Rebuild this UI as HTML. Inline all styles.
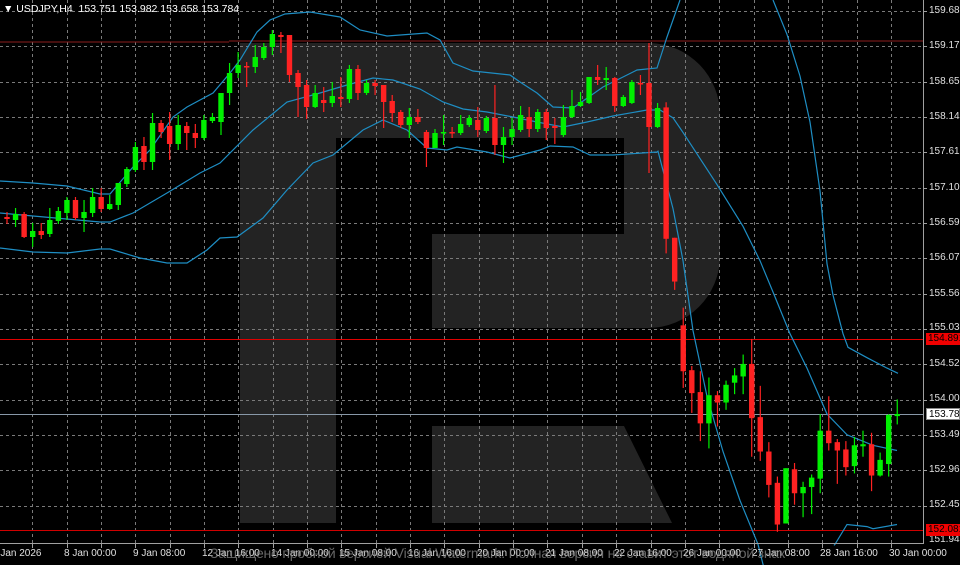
<!DOCTYPE html>
<html><head><meta charset="utf-8"><style>
html,body{margin:0;padding:0;background:#000;width:960px;height:565px;overflow:hidden}
#c{position:absolute;left:0;top:0}
.t{position:absolute;font:10px "Liberation Sans",sans-serif;color:#e0e0e0;white-space:nowrap;line-height:11px}
.hd{position:absolute;left:3px;top:3px;font:10.5px "Liberation Sans",sans-serif;color:#fff;white-space:nowrap}
.wm{position:absolute;left:210px;top:545px;font:14px "Liberation Sans","DejaVu Sans",sans-serif;color:#8a8a8a;white-space:nowrap;opacity:.75;letter-spacing:-0.2px}
.box{position:absolute;left:926px;width:34px;height:12px;font:10px "Liberation Sans",sans-serif;line-height:12px;padding-left:2px;box-sizing:border-box;overflow:hidden}
</style></head><body>
<svg id="c" width="960" height="565" xmlns="http://www.w3.org/2000/svg">
<path d="M240 43 L650 43 A72 72 0 0 1 720 115 L720 256 A72 72 0 0 1 648 328 L432 328 L432 234 L624 234 L624 138 L336 138 L336 523 L240 523 Z M432 426 L624 426 L672 523 L432 523 Z" fill="#232323"/>
<g id="grid" stroke="#7a7a7a" stroke-width="1" stroke-dasharray="3,3"></g>
<line x1="0" y1="42" x2="229" y2="42" stroke="#8b1c1c"/>
<line x1="229" y1="41" x2="923" y2="41" stroke="#8b1c1c"/>
<line x1="0" y1="339.5" x2="923" y2="339.5" stroke="#e00000"/>
<line x1="0" y1="530.5" x2="923" y2="530.5" stroke="#d00000"/>
<line x1="0" y1="414.5" x2="923" y2="414.5" stroke="#8898a8"/>
<g id="bands" fill="none" stroke="#1e8ec4" stroke-width="1.2"></g>
<g id="cand"></g>
<line x1="923.5" y1="0" x2="923.5" y2="544" stroke="#a0a0a0"/>
<line x1="0" y1="543.5" x2="924" y2="543.5" stroke="#a0a0a0"/>
<g id="ticks" stroke="#a0a0a0"></g>
</svg>
<div class="hd">▼ USDJPY,H4&nbsp; 153.751 153.982 153.658 153.784</div>
<div class="t" style="left:929px;top:5px">159.685</div>
<div class="t" style="left:929px;top:40px">159.175</div>
<div class="t" style="left:929px;top:76px">158.650</div>
<div class="t" style="left:929px;top:111px">158.140</div>
<div class="t" style="left:929px;top:146px">157.615</div>
<div class="t" style="left:929px;top:182px">157.105</div>
<div class="t" style="left:929px;top:217px">156.595</div>
<div class="t" style="left:929px;top:252px">156.070</div>
<div class="t" style="left:929px;top:288px">155.560</div>
<div class="t" style="left:929px;top:322px">155.035</div>
<div class="t" style="left:929px;top:358px">154.525</div>
<div class="t" style="left:929px;top:393px">154.000</div>
<div class="t" style="left:929px;top:429px">153.490</div>
<div class="t" style="left:929px;top:464px">152.965</div>
<div class="t" style="left:929px;top:499px">152.455</div>
<div class="t" style="left:929px;top:534px">151.945</div>
<div class="box" style="top:333px;background:#f00000;color:#000">154.891</div>
<div class="box" style="top:408px;background:#fff;color:#000;border:1px solid #888">153.784</div>
<div class="box" style="top:524px;background:#f00000;color:#000">152.081</div>
<div class="t" style="left:-8px;top:548px">5 Jan 2026</div>
<div class="t" style="left:64px;top:548px">8 Jan 00:00</div>
<div class="t" style="left:133px;top:548px">9 Jan 08:00</div>
<div class="t" style="left:202px;top:548px">12 Jan 16:00</div>
<div class="t" style="left:271px;top:548px">14 Jan 00:00</div>
<div class="t" style="left:339px;top:548px">15 Jan 08:00</div>
<div class="t" style="left:408px;top:548px">16 Jan 16:00</div>
<div class="t" style="left:477px;top:548px">20 Jan 00:00</div>
<div class="t" style="left:545px;top:548px">21 Jan 08:00</div>
<div class="t" style="left:614px;top:548px">22 Jan 16:00</div>
<div class="t" style="left:683px;top:548px">26 Jan 00:00</div>
<div class="t" style="left:752px;top:548px">27 Jan 08:00</div>
<div class="t" style="left:820px;top:548px">28 Jan 16:00</div>
<div class="t" style="left:889px;top:548px">30 Jan 00:00</div>
<div class="wm">Защищено пробной версией Visual Watermark. Полная версия не ставит этот водяной знак</div>
<script>
var NS="http://www.w3.org/2000/svg";
var S=1.0428;
function el(p,tag,a){var e=document.createElementNS(NS,tag);for(var k in a)e.setAttribute(k,a[k]);p.appendChild(e);return e;}
var g=document.getElementById('grid'),tk=document.getElementById('ticks');
for(var k=-7;k<=19;k++){var x=Math.round(238.3+34.35*k)+.5;if(x<0)continue;el(g,'line',{x1:x,y1:0,x2:x,y2:543});el(tk,'line',{x1:x,y1:544,x2:x,y2:548});}
for(var k=-2;k<=12;k++){var y=Math.round(81.7+35.33*k)+.5;el(g,'line',{x1:0,y1:y,x2:923,y2:y});el(tk,'line',{x1:923,y1:y,x2:927,y2:y});}
var b=document.getElementById('bands');
function pl(pts,fx){el(b,'polyline',{points:pts.map(function(p){var y=(p[0]>=fx)?p[1]*S:p[1];return p[0]+','+y.toFixed(1)}).join(' ')});}
pl([[0,181],[33,183],[67,186],[100,194],[110,194],[133,167],[150,150],[173,117],[187,107],[213,93],[230,73],[240,60],[257,32],[270,20],[285,14],[310,12],[340,17],[360,30],[387,36],[427,33],[440,40],[453,63],[473,71],[510,75],[520,82],[537,93],[553,107],[573,108],[603,87],[637,70],[657,68],[667,37],[680,0]],9999);
pl([[773,0],[787,33],[800,73],[810,117],[820,183],[827,253],[833,283],[843,320],[848,333],[867,343],[887,353],[898,358]],0);
pl([[0,213],[33,216],[100,222],[110,222],[133,213],[167,193],[200,173],[220,163],[253,130],[287,102],[320,93],[347,85],[373,78],[393,80],[420,89],[443,102],[463,109],[487,112],[513,117],[537,122],[563,127],[587,122],[613,116],[647,110],[660,110],[673,113],[683,127],[717,177],[743,217],[760,250],[773,280],[790,320],[807,353],[827,397],[847,417],[873,427],[897,432]],673);
pl([[0,248],[33,252],[67,253],[100,249],[110,249],[140,258],[167,263],[187,263],[207,250],[220,238],[237,237],[263,218],[287,190],[313,163],[333,155],[363,130],[383,120],[407,130],[427,148],[447,150],[457,147],[487,152],[510,158],[540,150],[550,146],[573,147],[590,155],[613,155],[657,152],[658,145],[673,200],[683,250],[693,317],[707,380],[723,433],[740,480],[758,522],[764,545]],658);
pl([[834,523],[835,522],[847,503],[867,505],[873,507],[897,503]],0);
var d=[[217,219,212,224],[220,214,208,227],[214,237,212,238],[237,231,223,247],[231,235,223,239],[234,220,208,237],[221,211,207,224],[213,200,197,220],[200,218,197,220],[218,212,200,232],[213,197,188,217],[197,209,188,212],[209,204,195,210],[205,183,183,210],[184,169,167,187],[170,147,142,172],[146,162,137,170],[162,123,113,170],[123,132,120,138],[126,144,112,160],[144,125,115,150],[126,133,122,150],[133,138,124,148],[138,120,115,140],[121,117,113,123],[122,93,93,135],[93,73,63,105],[73,65,52,78],[66,67,62,87],[67,57,45,73],[58,47,43,60],[47,34,30,55],[35,37,32,53],[35,75,35,82],[73,87,70,117],[85,107,80,119],[107,93,85,108],[100,103,87,112],[103,96,82,107],[97,99,77,107],[99,69,65,103],[69,93,65,100],[93,83,80,95],[83,86,80,95],[85,102,85,128],[101,113,95,122],[112,125,110,128],[125,117,108,138],[117,122,109,124],[132,148,130,167],[148,133,129,148],[133,132,115,145],[132,133,127,138],[133,124,115,135],[125,118,115,127],[120,130,107,137],[131,118,116,133],[118,145,85,155],[145,137,127,163],[137,129,118,145],[130,115,106,132],[117,129,107,137],[129,112,109,132],[112,128,109,140],[126,128,118,144],[135,117,105,137],[117,106,90,118],[106,102,92,107],[103,77,77,104],[77,80,65,85],[80,78,67,90],[78,106,77,112],[106,97,95,107],[103,82,80,104],[83,84,75,95],[83,127,43,173],[127,108,103,128],[103,229,98,243],[228,270,228,278],[312,356,295,372],[355,377,351,396],[376,406,356,423],[406,379,362,430],[379,386,375,409],[386,369,365,393],[367,360,353,378],[361,349,340,378],[349,401,325,438],[400,433,370,442],[433,465,424,477],[463,503,457,510],[502,449,449,502],[450,473,444,484],[473,467,462,496],[467,458,455,493],[459,413,397,473],[413,425,380,432],[424,432,421,464],[431,448,423,456],[447,427,419,454],[428,426,413,438],[426,456,415,471],[456,441,434,457],[445,398,397,457],[399,397,383,407]];
var c=document.getElementById('cand');
d.forEach(function(q,i){var x=7+8.56*i,up=q[1]<q[0],col=up?'#00f000':'#ff2222';
if(i>=77)q=q.map(function(v){return v*S;});
el(c,'line',{x1:x,y1:q[2],x2:x,y2:q[3],stroke:col,'stroke-width':1.2});
var t=Math.min(q[0],q[1]),h=Math.max(Math.abs(q[0]-q[1]),1.5);
el(c,'rect',{x:x-2.7,y:t,width:5.4,height:h,fill:col});});
</script>
</body></html>
